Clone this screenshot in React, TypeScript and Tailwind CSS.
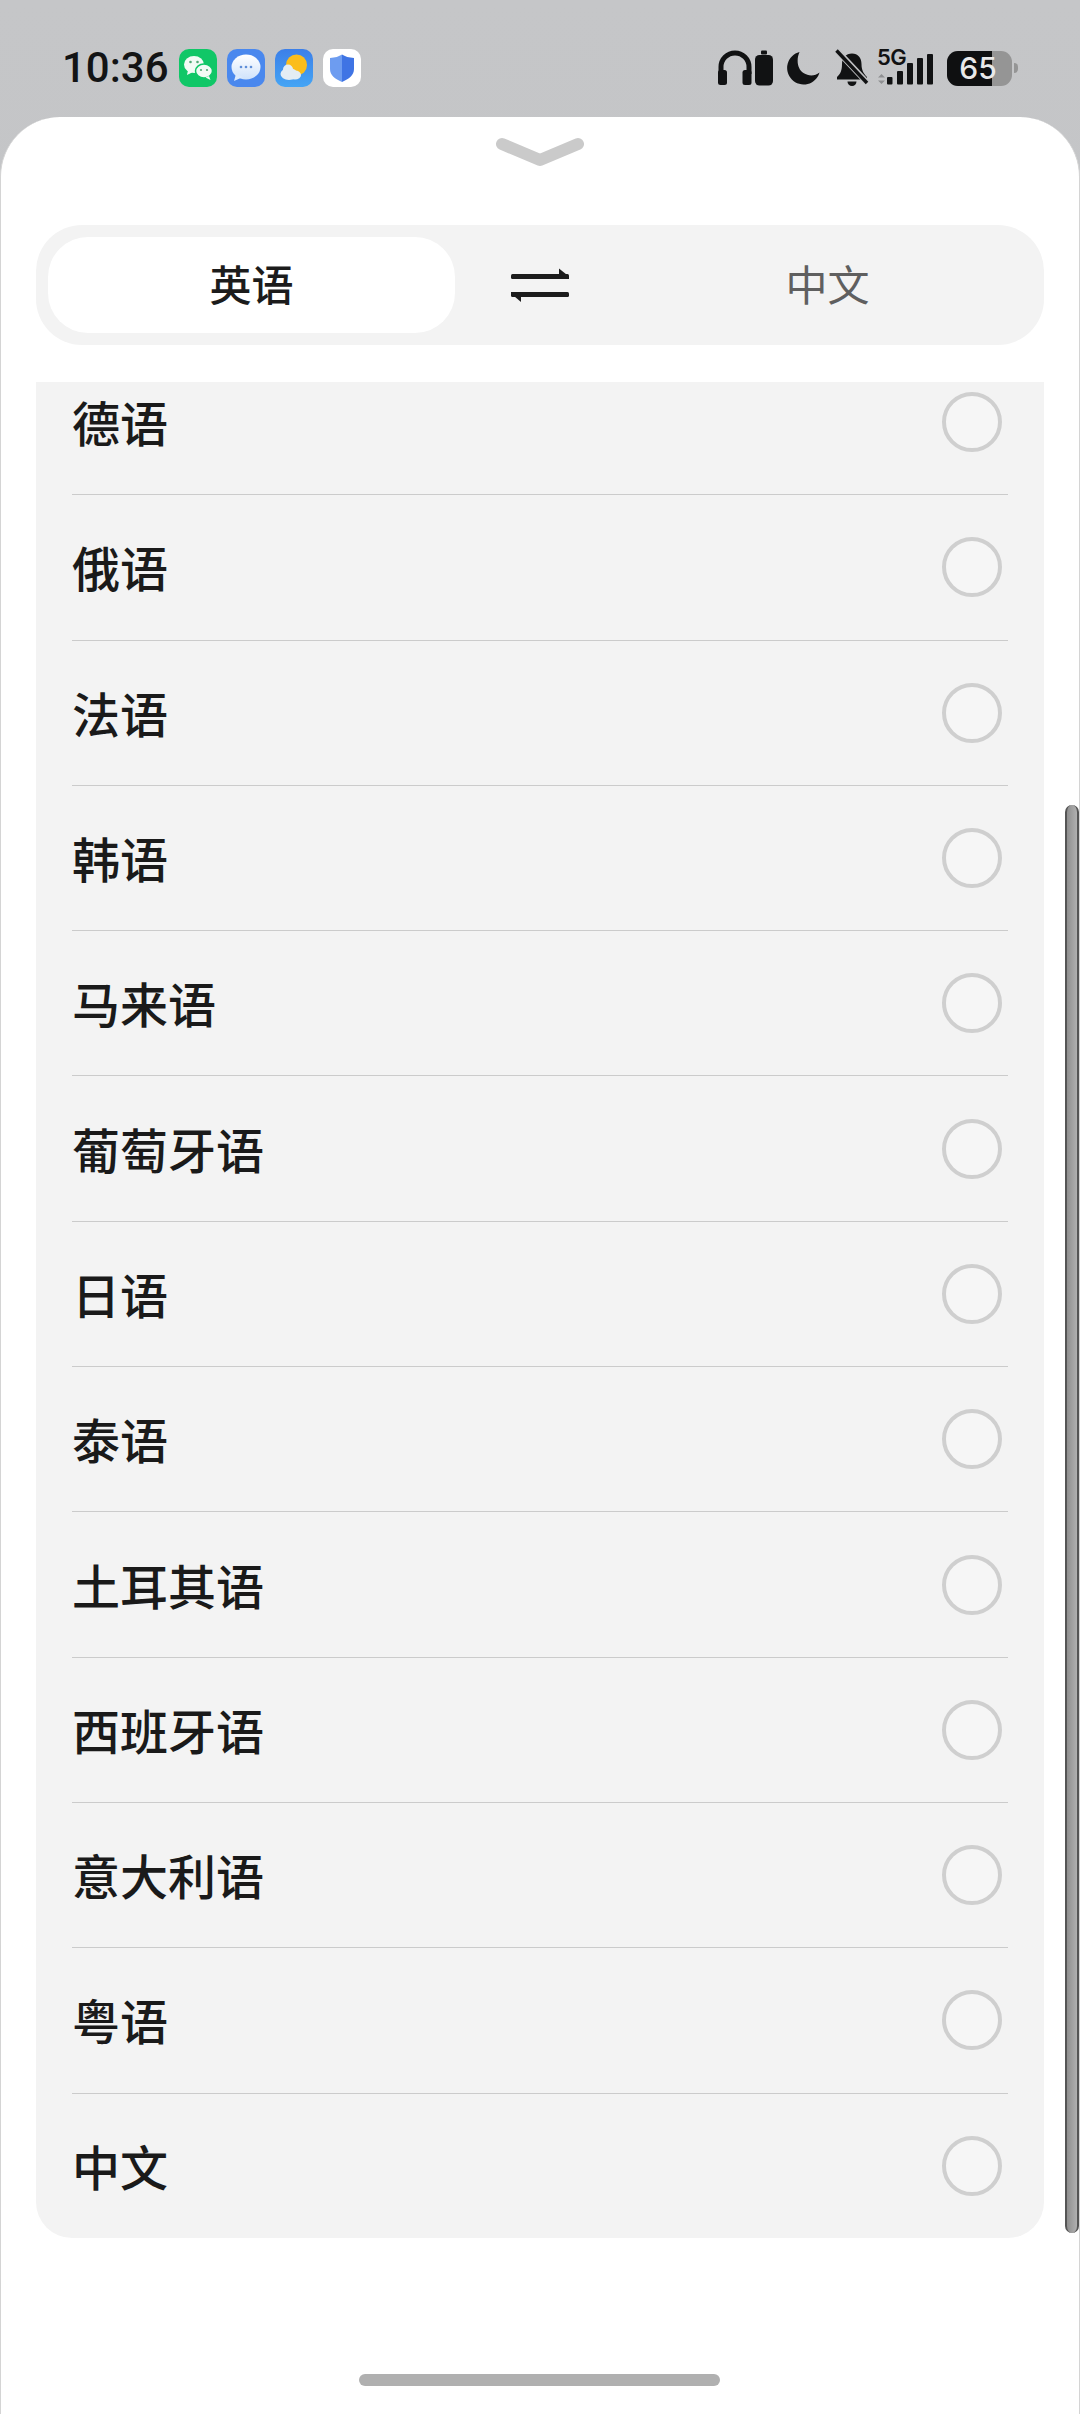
import React from 'react';

const languages = ['德语', '俄语', '法语', '韩语', '马来语', '葡萄牙语', '日语', '泰语', '土耳其语', '西班牙语', '意大利语', '粤语', '中文'];

const cjk = { fontFamily: '"Noto Sans CJK SC", "Noto Sans", sans-serif' };

const AppIcons = () => (
  <div className="flex gap-[10px]">
    <svg width="38" height="38" viewBox="0 0 38 38">
      <rect width="38" height="38" rx="10" fill="#10c767" />
      <ellipse cx="15" cy="15.500" rx="10" ry="8.500" fill="#f2fbf5" />
      <path d="M9 21l-1 5 6-3z" fill="#f2fbf5" />
      <ellipse cx="25" cy="22" rx="8.500" ry="7" fill="#f2fbf5" stroke="#10c767" strokeWidth="1.500" />
      <path d="M30 27l1.500 4-5-2.500z" fill="#f2fbf5" />
      <circle cx="11.500" cy="13" r="1.300" fill="#54a877" />
      <circle cx="18.500" cy="13" r="1.300" fill="#54a877" />
      <circle cx="22" cy="21" r="1.100" fill="#54a877" />
      <circle cx="28" cy="21" r="1.100" fill="#54a877" />
    </svg>
    <svg width="38" height="38" viewBox="0 0 38 38">
      <defs>
        <linearGradient id="msgBubble" x1="0" y1="0" x2="0" y2="1">
          <stop offset="0" stopColor="#ffffff" />
          <stop offset="1" stopColor="#cfe2fb" />
        </linearGradient>
      </defs>
      <rect width="38" height="38" rx="10" fill="#4a88ee" />
      <ellipse cx="19" cy="18" rx="14.500" ry="12.500" fill="url(#msgBubble)" />
      <path d="M9 25l-2 7 9-4z" fill="#dceafc" />
      <circle cx="14" cy="18" r="1.300" fill="#5f8fd8" />
      <circle cx="19" cy="18" r="1.300" fill="#5f8fd8" />
      <circle cx="24" cy="18" r="1.300" fill="#5f8fd8" />
    </svg>
    <svg width="38" height="38" viewBox="0 0 38 38">
      <defs>
        <linearGradient id="skyFill" x1="0" y1="0" x2="0" y2="1">
          <stop offset="0" stopColor="#3c7fe8" />
          <stop offset="1" stopColor="#45a5f5" />
        </linearGradient>
      </defs>
      <rect width="38" height="38" rx="10" fill="url(#skyFill)" />
      <circle cx="21.500" cy="16" r="10.500" fill="#fbbd1c" />
      <ellipse cx="14" cy="25" rx="8.500" ry="6" fill="#e4edf4" />
      <circle cx="13" cy="20.500" r="5" fill="#e4edf4" />
      <ellipse cx="20" cy="26" rx="6" ry="4.500" fill="#e4edf4" />
    </svg>
    <svg width="38" height="38" viewBox="0 0 38 38">
      <defs>
        <linearGradient id="shieldFill" x1="0" y1="0" x2="1" y2="0">
          <stop offset="0" stopColor="#6d9cf0" />
          <stop offset="0.500" stopColor="#6d9cf0" />
          <stop offset="0.500" stopColor="#3f74e4" />
          <stop offset="1" stopColor="#3f74e4" />
        </linearGradient>
      </defs>
      <rect width="38" height="38" rx="10" fill="#ffffff" />
      <path d="M19 5.500c3 2 7 3.200 12 3.500v11c0 6-5 10-12 13-7-3-12-7-12-13V9c5-.3 9-1.500 12-3.500z" fill="url(#shieldFill)" />
    </svg>
  </div>
);

const StatusIcons = () => (
  <div className="ml-auto flex items-center text-[#111213]">
    <svg width="36" height="36" viewBox="0 0 36 36" fill="none">
      <path d="M4 24V17a14 14 0 0 1 28 0v7" stroke="#111213" strokeWidth="5" />
      <rect x="1" y="20" width="9" height="15" rx="2.500" fill="#111213" />
      <rect x="25.500" y="20" width="9" height="15" rx="2.500" fill="#111213" />
    </svg>
    <svg className="ml-[2px]" width="18" height="36" viewBox="0 0 18 36">
      <rect x="6" y="0.500" width="6" height="4" rx="1" fill="#111213" />
      <rect x="0" y="5" width="18" height="30.500" rx="4.500" fill="#111213" />
    </svg>
    <svg className="ml-[13px]" width="34" height="34" viewBox="0 0 34 34">
      <path d="M13.500 1A16.500 16.500 0 1 0 33.500 21.500C29 25 23 25.500 17.500 22 11.500 18 10 9 13.500 1z" fill="#111213" />
    </svg>
    <svg className="ml-[15px]" width="34" height="38" viewBox="0 0 34 38">
      <path d="M17 4.500c6 0 9.500 4.500 9.500 10.500 0 6 2 9.500 5.500 13v2.500H2V28c3.500-3 5-7 5-13 0-6 4-10.500 10-10.500z" fill="#111213" />
      <path d="M12.500 32.500h9a4.500 4.500 0 0 1-9 0z" fill="#111213" />
      <path d="M2 1.500L32.500 34" stroke="#c2c3c5" strokeWidth="6" />
      <path d="M1.500 1.500L32 34" stroke="#111213" strokeWidth="3.400" />
    </svg>
    <div className="relative ml-[8px] h-[36px] w-[58px]">
      <span className="absolute left-0 top-[-4px] text-[22px] font-semibold leading-[22px] tracking-[-0.5px] text-[#111213]" style={{ fontFamily: 'Inter, sans-serif' }}>5G</span>
      <svg className="absolute left-0 top-0" width="58" height="36" viewBox="0 0 58 36">
        <path d="M4 24l3.500 3.500h-7zM4 34l3.500-3.500h-7z" fill="#8f9092" transform="translate(0.500 0)" />
        <rect x="10" y="27" width="5.500" height="7.500" rx="1" fill="#111213" />
        <rect x="20" y="21" width="6" height="13.500" rx="1" fill="#111213" />
        <rect x="30" y="13" width="6" height="21.500" rx="1" fill="#111213" />
        <rect x="40" y="8" width="6" height="26.500" rx="1" fill="#111213" />
        <rect x="50" y="4" width="6" height="30.500" rx="1" fill="#111213" />
      </svg>
    </div>
    <div className="relative ml-[12px] h-[35px] w-[65px]">
      <div className="h-full w-full overflow-hidden rounded-[11px] bg-[#959595]">
        <div className="h-full w-[45px] bg-[#0f1011]" />
      </div>
      <span className="absolute inset-0 flex items-center justify-center pr-[3px] text-[30px] font-medium leading-none text-[#e9e9e9]" style={{ fontFamily: 'Inter, sans-serif' }}>65</span>
    </div>
    <div className="ml-[2px] h-[10px] w-[4px] rounded-r-full bg-[#959595]" />
  </div>
);

const SwapIcon = () => (
  <svg width="58" height="34" viewBox="0 0 58 34">
    <rect x="0" y="6" width="58" height="5" rx="1.500" fill="#1c1c1c" />
    <path d="M48 0.500L58 8.500V11H48z" fill="#1c1c1c" />
    <rect x="0" y="24" width="58" height="5" rx="1.500" fill="#1c1c1c" />
    <path d="M0 25.500L10 34V24H0z" fill="#1c1c1c" />
  </svg>
);

const Radio = () => (
  <div className="mr-[6px] h-[60px] w-[60px] rounded-full border-[4px] border-[#cfcfcf] bg-[#f6f6f6]" />
);

const App = () => {
  return (
    <div className="flex h-[2414px] w-[1080px] flex-col overflow-hidden bg-gradient-to-b from-[#c5c6c8] to-[#bbbcbe]">
      <div className="flex h-[117px] shrink-0 items-start pl-[62px] pr-[62px] pt-[49px]">
        <span className="h-[38px] w-[117px] text-[42px] font-medium leading-[38px] text-[#131415]" style={{ fontFamily: 'Roboto, sans-serif' }}>10:36</span>
        <AppIcons />
        <StatusIcons />
      </div>

      <div className="relative flex flex-1 flex-col rounded-t-[60px] border-x border-[#d4d4d4] bg-white px-[35px]">
        <svg className="mx-auto mt-[20px] shrink-0" width="90" height="30" viewBox="0 0 90 30">
          <path d="M7 7L45 23 83 7" fill="none" stroke="#cacaca" strokeWidth="12" strokeLinecap="round" strokeLinejoin="round" />
        </svg>

        <div className="mt-[58px] flex h-[120px] shrink-0 items-center rounded-[46px] bg-[#f3f3f3] pl-[12px]">
          <div className="flex h-[96px] w-[407px] items-center justify-center rounded-[40px] bg-white pb-[4px] text-[42px] font-medium leading-none text-[#1c1c1c]" style={cjk}>英语</div>
          <div className="ml-[56px] flex">
            <SwapIcon />
          </div>
          <div className="flex-1 pb-[4px] pl-[42px] text-center text-[42px] leading-none text-[#5f5f5f]" style={cjk}>中文</div>
        </div>

        <div className="mt-[37px] h-[1856px] shrink-0 overflow-hidden rounded-b-[36px] bg-[#f3f3f3] pl-[36px] pr-[36px]">
          <div className="-mt-[32px]">
            {languages.map((lang, i) => (
              <div
                key={lang}
                className={`flex h-[145.3px] items-center justify-between ${i < languages.length - 1 ? 'border-b border-[#cbcbcb]' : ''}`}
              >
                <span className="pb-[2px] text-[48px] font-medium leading-none text-[#1a1a1a]" style={cjk}>{lang}</span>
                <Radio />
              </div>
            ))}
          </div>
        </div>

        <div className="absolute bottom-[181px] right-0 h-[1428px] w-[14px] rounded-full border-x-2 border-[#555] bg-gradient-to-r from-[#8f8f8f] to-[#b0b0b0]" />
        <div className="absolute bottom-[28px] left-[358px] h-[12px] w-[361px] rounded-full bg-[#b0b0b0]" />
      </div>
    </div>
  );
};

export default App;
